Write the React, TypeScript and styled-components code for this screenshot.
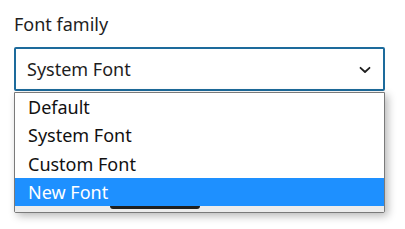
import React from "react";
import styled, { createGlobalStyle } from "styled-components";

const GlobalStyle = createGlobalStyle`
  html, body { margin: 0; padding: 0; background: #ffffff; }
  body { font-family: "Noto Sans", "Open Sans", sans-serif; color: #1e1e1e; }
`;

const Field = styled.div`
  padding: 12px 20px 0 14px;
  width: 371px;
  min-height: 217px;
  display: flex;
  flex-direction: column;
`;

const Label = styled.label`
  font-size: 18px;
  line-height: 24px;
  color: #1e1e1e;
  margin-bottom: 11px;
`;

const SelectBox = styled.div`
  box-sizing: border-box;
  height: 44px;
  border: 2px solid #1d6b9c;
  border-radius: 2px;
  padding: 0 12px 0 11px;
  display: flex;
  align-items: center;
  justify-content: space-between;
  font-size: 18px;
  color: #1e1e1e;
  background: #fff;
`;

const Chevron = styled.svg`
  width: 12px;
  height: 8px;
  margin-top: 2px;
`;

const Dropdown = styled.ul`
  margin: 1px 0 0;
  padding: 0;
  list-style: none;
  background: #fff;
  border: 1px solid #7a7a7a;
  border-radius: 0 0 2px 2px;
  box-shadow: 3px 3px 8px rgba(0, 0, 0, 0.28);
`;

const Option = styled.li<{ $active?: boolean }>`
  height: 28.3px;
  line-height: 28px;
  padding-left: 13px;
  font-size: 18px;
  color: ${(p) => (p.$active ? "#ffffff" : "#111111")};
  background: ${(p) => (p.$active ? "#1e90ff" : "transparent")};
`;

const ScrollTrack = styled.div`
  height: 6px;
  background: #ececec;
  display: flex;
  padding-left: 95px;
`;

const ScrollThumb = styled.div`
  width: 90px;
  height: 2.5px;
  border-radius: 0 0 3px 3px;
  background: #1f1f1f;
`;

const options = ["Default", "System Font", "Custom Font", "New Font"];

export default function App() {
  return (
    <>
      <GlobalStyle />
      <Field>
        <Label>Font family</Label>
        <SelectBox>
          <span>System Font</span>
          <Chevron viewBox="0 0 12 8">
            <path d="M1.5 1.8 L6 6 L10.5 1.8" fill="none" stroke="#1e1e1e" strokeWidth="1.8" strokeLinecap="round" strokeLinejoin="round" />
          </Chevron>
        </SelectBox>
        <Dropdown>
          {options.map((o) => (
            <Option key={o} $active={o === "New Font"}>
              {o}
            </Option>
          ))}
          <ScrollTrack>
            <ScrollThumb />
          </ScrollTrack>
        </Dropdown>
      </Field>
    </>
  );
}
